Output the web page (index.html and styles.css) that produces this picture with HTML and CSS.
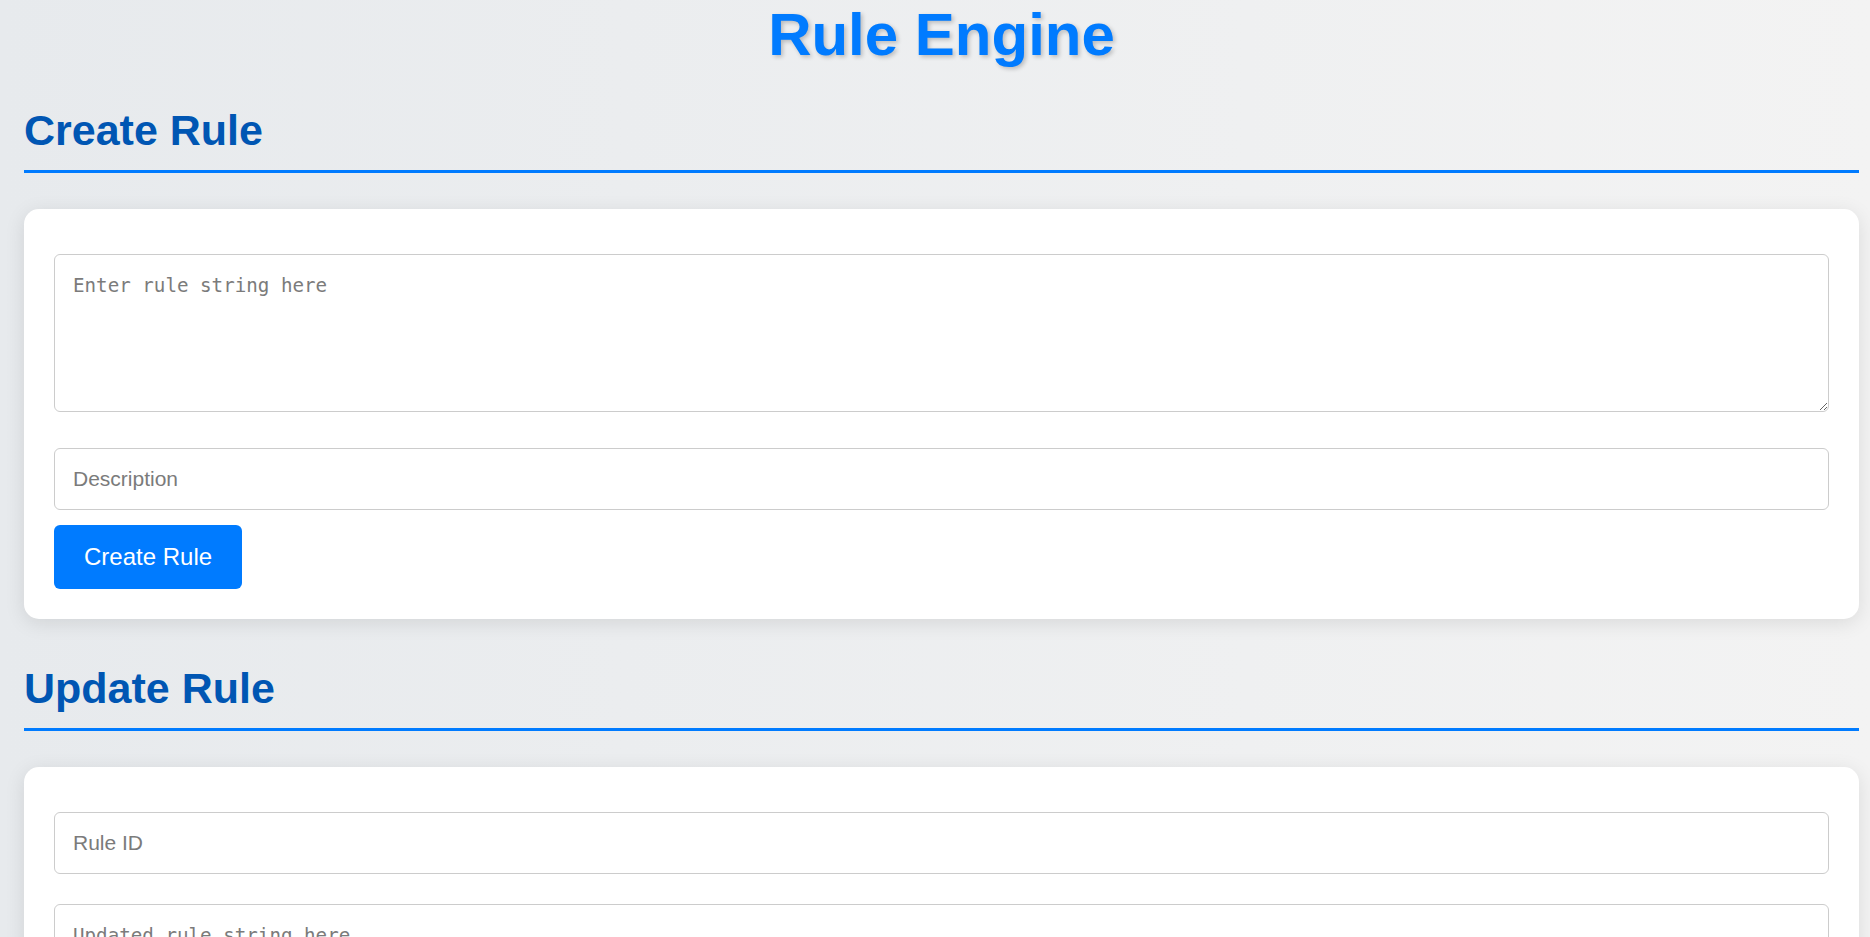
FILE: index.html
```html
<!DOCTYPE html>
<html lang="en">
<head>
<meta charset="utf-8">
<title>Rule Engine</title>
<link rel="stylesheet" href="styles.css">
</head>
<body>
<main class="page">
  <h1 class="title">Rule Engine</h1>

  <section class="section">
    <h2 class="section-title">Create Rule</h2>
    <div class="card">
      <textarea class="field field-area" placeholder="Enter rule string here"></textarea>
      <input class="field field-input" type="text" placeholder="Description">
      <button class="btn" type="button">Create Rule</button>
    </div>
  </section>

  <section class="section">
    <h2 class="section-title">Update Rule</h2>
    <div class="card">
      <input class="field field-input" type="text" placeholder="Rule ID">
      <textarea class="field field-area" placeholder="Updated rule string here"></textarea>
      <button class="btn" type="button">Update Rule</button>
    </div>
  </section>

  <section class="section">
    <h2 class="section-title">Evaluate Rule</h2>
    <div class="card">
      <input class="field field-input" type="text" placeholder="Rule ID">
      <textarea class="field field-area" placeholder="Enter data as JSON"></textarea>
      <button class="btn" type="button">Evaluate Rule</button>
    </div>
  </section>
</main>
</body>
</html>
```

FILE: styles.css
```css
html {
  scrollbar-width: none;
}
html::-webkit-scrollbar {
  display: none;
}
body {
  margin: 0;
  min-height: 100vh;
  background: linear-gradient(to right, #e7eaed, #f3f3f3);
  font-family: "Liberation Sans", Arial, sans-serif;
}
.page {
  padding: 0 11px 40px 24px;
}
.title {
  margin: 0 0 37px;
  text-align: center;
  font-size: 60px;
  line-height: normal;
  font-weight: bold;
  color: #007bff;
  text-shadow: 2px 2px 4px rgba(0, 0, 0, 0.22);
}
.section {
  display: flex;
  flex-direction: column;
}
.section-title {
  margin: 0 0 36px;
  padding-bottom: 15px;
  border-bottom: 3px solid #007bff;
  font-size: 43px;
  line-height: normal;
  font-weight: bold;
  color: #0056b3;
}
.card {
  display: flex;
  flex-direction: column;
  align-items: stretch;
  margin-bottom: 45px;
  padding: 30px;
  background: #fff;
  border-radius: 15px;
  box-shadow: 0 4px 20px rgba(0, 0, 0, 0.1);
}
.field {
  box-sizing: border-box;
  width: 100%;
  border: 1px solid #cccccc;
  border-radius: 6px;
  background: #fff;
  color: #333;
  outline: none;
}
.field::placeholder {
  color: #7b7b7b;
}
.field-area {
  height: 158px;
  margin: 15px 0 21px;
  padding: 19px 18px;
  font-family: "DejaVu Sans Mono", "Liberation Mono", monospace;
  font-size: 19.2px;
  resize: both;
}
.field-input {
  margin: 15px 0;
  padding: 18px 18px;
  font-family: "Liberation Sans", Arial, sans-serif;
  font-size: 21px;
  line-height: normal;
}
.btn {
  align-self: flex-start;
  margin: 0;
  padding: 18px 30px;
  border: none;
  border-radius: 6px;
  background: #007bff;
  color: #fff;
  font-family: "Liberation Sans", Arial, sans-serif;
  font-size: 24px;
  line-height: normal;
  cursor: pointer;
}
```
